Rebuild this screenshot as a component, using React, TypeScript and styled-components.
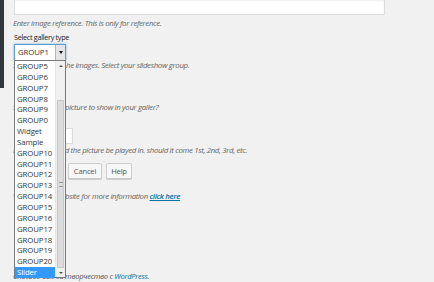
import React from "react";
import styled, { createGlobalStyle } from "styled-components";

const GlobalStyle = createGlobalStyle`
  html, body { margin: 0; padding: 0; background: #f1f1f1; }
  body { font-family: "Open Sans", "Liberation Sans", sans-serif; color: #444; }
  * { box-sizing: border-box; }
`;

const Page = styled.div`
  display: flex;
  align-items: flex-start;
  width: 434px;
  height: 282px;
  overflow: hidden;
  background: #f1f1f1;
`;

const Sidebar = styled.div`
  width: 4px;
  height: 88px;
  flex: none;
  background: #32373c;
`;

const Content = styled.div`
  flex: 1;
  align-self: stretch;
  display: flex;
  flex-direction: column;
  padding-left: 10px;
  position: relative;
`;

const TextInput = styled.div`
  width: 371px;
  height: 16px;
  margin-top: -1px;
  background: #fff;
  border: 1px solid #ddd;
  box-shadow: inset 0 1px 2px rgba(0, 0, 0, 0.07);
`;

const Description = styled.p<{ $top: number }>`
  margin: ${(p) => p.$top}px 0 0 -1px;
  font-size: 7.8px;
  letter-spacing: -0.33px;
  line-height: 10px;
  font-style: italic;
  color: #666;
  white-space: nowrap;
`;

/* Start of a sentence that lies under the open dropdown list */
const Covered = styled.span<{ $width: number }>`
  display: inline-block;
  width: ${(p) => p.$width}px;
  overflow: hidden;
  vertical-align: bottom;
  white-space: nowrap;
`;

const Label = styled.div<{ $top: number }>`
  margin-top: ${(p) => p.$top}px;
  font-size: 7.3px;
  letter-spacing: -0.32px;
  line-height: 10px;
  color: #222;
  white-space: nowrap;
`;

const SelectWrap = styled.div`
  position: relative;
  margin-top: 2px;
  width: 52px;
  z-index: 2;
`;

const SelectBox = styled.div`
  display: flex;
  align-items: stretch;
  width: 52px;
  height: 17px;
  background: #fff;
  border: 1px solid #5b9dd9;
  box-shadow: 0 0 2px rgba(30, 140, 190, 0.6);
`;

const SelectValue = styled.span`
  flex: 1;
  font-size: 7.8px;
  letter-spacing: -0.1px;
  line-height: 15px;
  padding-left: 3px;
  color: #333;
`;

const ArrowButton = styled.span`
  width: 10px;
  display: flex;
  align-items: center;
  justify-content: center;
  background: #e4e4e4;
  border-left: 1px solid #9bbde0;
  &::after {
    content: "";
    border-left: 2.5px solid transparent;
    border-right: 2.5px solid transparent;
    border-top: 3px solid #111;
  }
`;

const Dropdown = styled.div`
  position: absolute;
  left: 0;
  top: 16px;
  width: 52px;
  height: 218px;
  display: flex;
  background: #fff;
  border: 1px solid #7a7a7a;
`;

const OptionList = styled.div`
  flex: 1;
  display: flex;
  flex-direction: column;
`;

const OptionItem = styled.div<{ $selected?: boolean }>`
  height: 10.85px;
  line-height: 10.85px;
  font-size: 7.8px;
  letter-spacing: -0.1px;
  padding-left: 2px;
  color: ${(p) => (p.$selected ? "#fff" : "#333")};
  background: ${(p) => (p.$selected ? "#3399ff" : "transparent")};
  white-space: nowrap;
`;

const Scrollbar = styled.div`
  width: 10px;
  display: flex;
  flex-direction: column;
  background: #f0f0f0;
  border-left: 1px solid #e6e6e6;
`;

const ScrollArrow = styled.div<{ $down?: boolean }>`
  height: 9px;
  display: flex;
  align-items: center;
  justify-content: center;
  &::after {
    content: "";
    border-left: 2px solid transparent;
    border-right: 2px solid transparent;
    ${(p) =>
      p.$down
        ? "border-top: 2px solid #505050;"
        : "border-bottom: 2px solid #505050;"}
  }
`;

const ScrollThumb = styled.div`
  flex: 1;
  margin: 30px 1px 0;
  background: #dcdcdc;
  border: 1px solid #c8c8c8;
  display: flex;
  align-items: center;
  justify-content: center;
  &::after {
    content: "";
    width: 4px;
    height: 3px;
    border-top: 1px solid #999;
    border-bottom: 1px solid #999;
  }
`;

const SmallInput = styled.div`
  margin-top: 5px;
  width: 59px;
  height: 16px;
  background: #fff;
  border: 1px solid #ddd;
`;

const ButtonRow = styled.div`
  display: flex;
  gap: 4px;
  margin-top: 8px;
`;

const Button = styled.button<{ $width: number }>`
  width: ${(p) => p.$width}px;
  height: 16px;
  padding: 0;
  font-family: "Open Sans", "Liberation Sans", sans-serif;
  font-size: 7.6px;
  letter-spacing: -0.2px;
  line-height: 14px;
  color: #555;
  background: #f7f7f7;
  border: 1px solid #ccc;
  border-radius: 2px;
  box-shadow: 0 1px 0 #ccc;
`;

const Link = styled.a<{ $bold?: boolean }>`
  color: #0073aa;
  font-weight: ${(p) => (p.$bold ? 600 : 400)};
  text-decoration: ${(p) => (p.$bold ? "underline" : "none")};
`;

const Footer = styled.p`
  margin: 0;
  position: absolute;
  left: 9px;
  top: 271px;
  font-size: 7.6px;
  letter-spacing: -0.3px;
  line-height: 10px;
  font-style: italic;
  color: #555;
  white-space: nowrap;
`;

const options = [
  "GROUP5", "GROUP6", "GROUP7", "GROUP8", "GROUP9", "GROUP0",
  "Widget", "Sample",
  "GROUP10", "GROUP11", "GROUP12", "GROUP13", "GROUP14", "GROUP15",
  "GROUP16", "GROUP17", "GROUP18", "GROUP19", "GROUP20", "Slider",
];

export default function App() {
  return (
    <>
      <GlobalStyle />
      <Page>
        <Sidebar />
        <Content>
          <TextInput />
          <Description $top={3}>Enter image reference. This is only for reference.</Description>
          <Label $top={4}>Select gallery type</Label>
          <SelectWrap>
            <SelectBox>
              <SelectValue>GROUP1</SelectValue>
              <ArrowButton />
            </SelectBox>
            <Dropdown>
              <OptionList>
                {options.map((o) => (
                  <OptionItem key={o} $selected={o === "Slider"}>{o}</OptionItem>
                ))}
              </OptionList>
              <Scrollbar>
                <ScrollArrow />
                <ScrollThumb />
                <ScrollArrow $down />
              </Scrollbar>
            </Dropdown>
          </SelectWrap>
          <Description $top={-1}>
            <Covered $width={53}>Select group for t</Covered>he images. Select your slideshow group.
          </Description>
          <Label $top={10}>Count</Label>
          <Description $top={12}>
            <Covered $width={52}>Select number of </Covered>picture to show in your galler?
          </Description>
          <Label $top={1}>Order</Label>
          <SmallInput />
          <Description $top={1}>
            <Covered $width={50}>In what order shou</Covered>ld the picture be played in. should it come 1st, 2nd, 3rd, etc.
          </Description>
          <ButtonRow>
            <Button $width={50}>Save</Button>
            <Button $width={34}>Cancel</Button>
            <Button $width={26}>Help</Button>
          </ButtonRow>
          <Description $top={12}>
            <Covered $width={52}>Visit our we</Covered>bsite for more information <Link $bold href="#">click here</Link>
          </Description>
          <Footer>
            Спасибо вам за творчество с <Link href="#">WordPress</Link>.
          </Footer>
        </Content>
      </Page>
    </>
  );
}
